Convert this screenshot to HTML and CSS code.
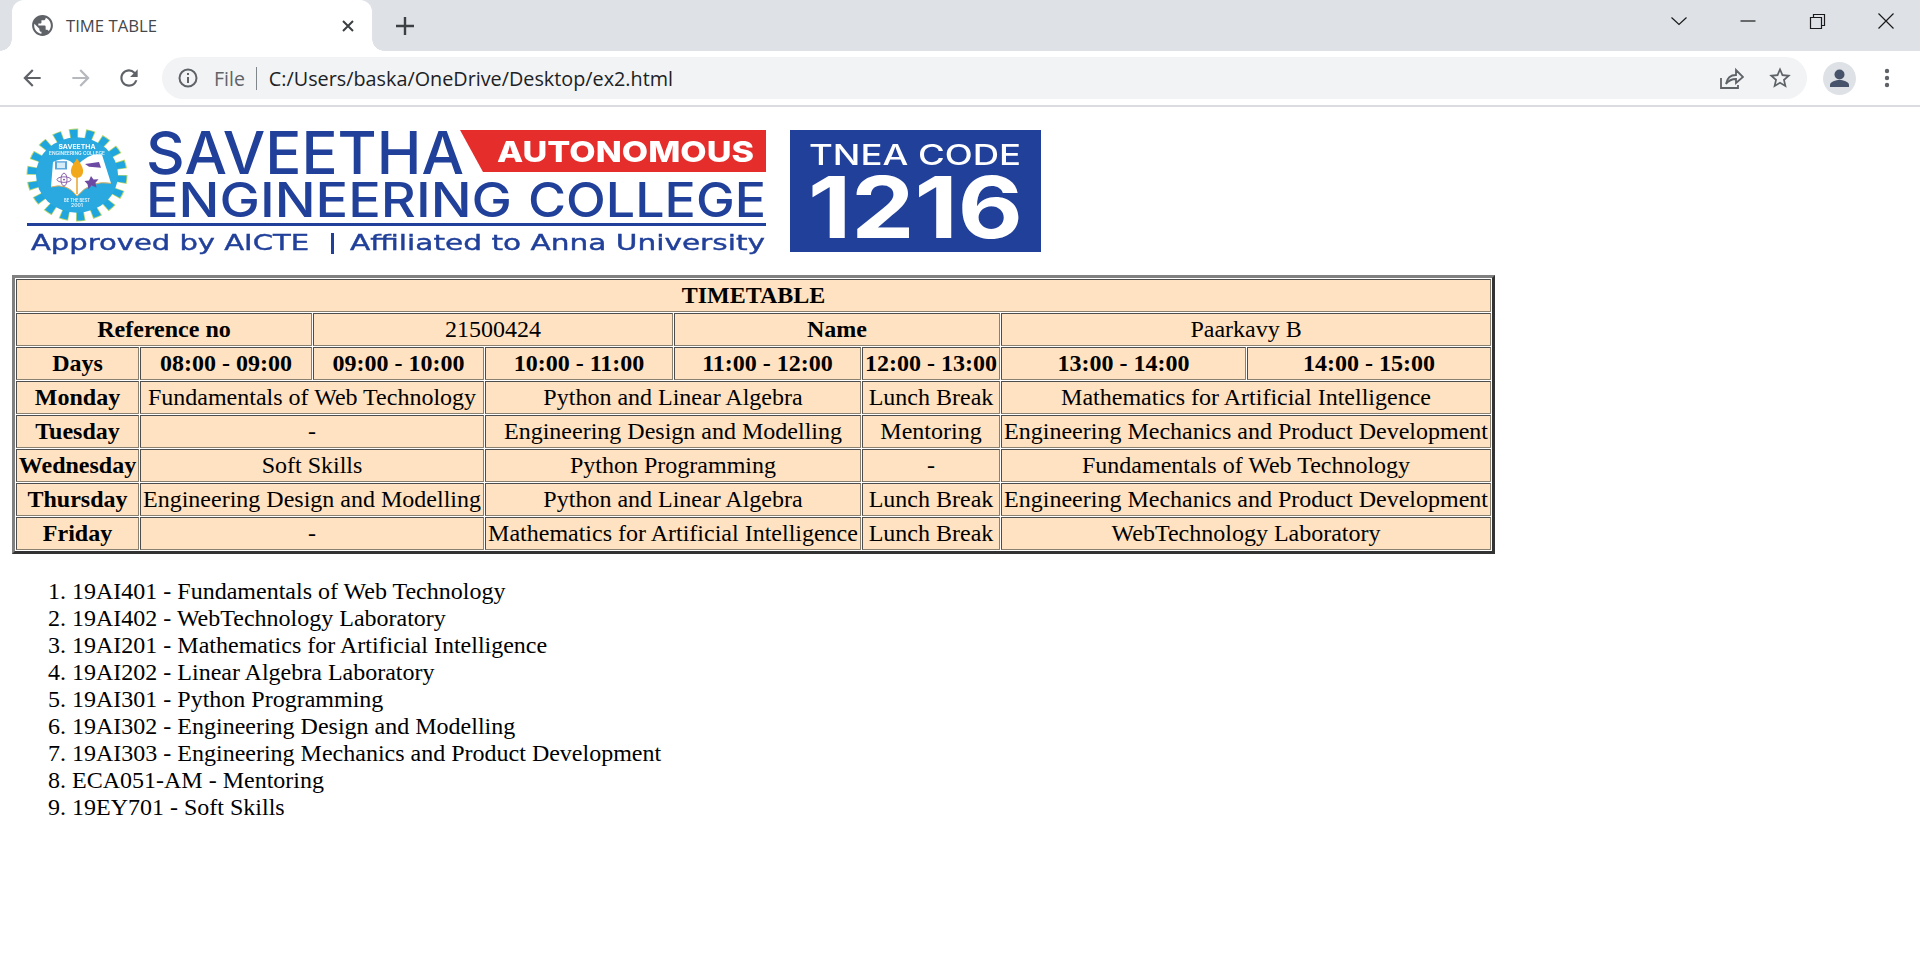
FILE: index.html
```html
<!DOCTYPE html>
<html lang="en">
<head>
<meta charset="utf-8">
<title>TIME TABLE</title>
<link rel="stylesheet" href="styles.css">
</head>
<body>
<header class="chrome">
  <div class="strip">
    <div class="tab">
      <svg class="globe" viewBox="0 0 24 24"><path d="M12 2C6.48 2 2 6.48 2 12s4.48 10 10 10 10-4.48 10-10S17.52 2 12 2zm-1 17.93c-3.95-.49-7-3.85-7-7.93 0-.62.08-1.21.21-1.79L9 15v1c0 1.1.9 2 2 2v1.93zm6.9-2.54c-.26-.81-1-1.39-1.9-1.39h-1v-3c0-.55-.45-1-1-1H8v-2h2c.55 0 1-.45 1-1V7h2c1.1 0 2-.9 2-2v-.41c2.93 1.19 5 4.06 5 7.41 0 2.08-.8 3.97-2.1 5.39z"/></svg>
      <span class="tab-title">TIME TABLE</span>
      <svg class="tab-close" viewBox="0 0 16 16"><path d="M3 3l10 10M13 3L3 13"/></svg>
    </div>
    <svg class="new-tab" viewBox="0 0 26 26"><path d="M13 4v18M4 13h18"/></svg>
    <div class="win">
      <div class="win-btn"><svg viewBox="0 0 18 18"><path d="M1.500 5.500L9 12.500l7.500-7"/></svg></div>
      <div class="win-btn"><svg viewBox="0 0 18 18"><path d="M1.500 9h15"/></svg></div>
      <div class="win-btn"><svg viewBox="0 0 18 18"><path d="M2.500 5.500h11v11h-11zM5.500 5.500v-3h11v11h-3"/></svg></div>
      <div class="win-btn"><svg viewBox="0 0 18 18"><path d="M1.500 1.500l15 15M16.500 1.500l-15 15"/></svg></div>
    </div>
  </div>
  <div class="toolbar">
    <svg class="nav" viewBox="0 0 24 24"><path d="M20 11H7.830l5.590-5.590L12 4l-8 8 8 8 1.410-1.410L7.830 13H20v-2z"/></svg>
    <svg class="nav nav-off" viewBox="0 0 24 24"><path d="M4 11h12.170l-5.590-5.590L12 4l8 8-8 8-1.410-1.410L16.170 13H4v-2z"/></svg>
    <svg class="nav nav-reload" viewBox="0 0 24 24"><path d="M17.650 6.350A7.958 7.958 0 0 0 12 4c-4.420 0-7.990 3.580-7.990 8s3.570 8 7.990 8c3.730 0 6.840-2.550 7.730-6h-2.080A5.990 5.990 0 0 1 12 18c-3.310 0-6-2.690-6-6s2.690-6 6-6c1.660 0 3.140.690 4.220 1.780L13 11h7V4l-2.350 2.350z"/></svg>
    <div class="omnibox">
      <svg class="info" viewBox="0 0 22 22"><circle cx="11" cy="11" r="8.500"/><path d="M11 10v6M11 6v2"/></svg>
      <span class="scheme">File</span>
      <span class="sep"></span>
      <span class="url">C:/Users/baska/OneDrive/Desktop/ex2.html</span>
      <svg class="share" viewBox="0 0 26 26"><path d="M3 13v10h17v-3M8 19c1-6 5-9 10-9V5l7 7-7 6v-4c-4 0-7 1-10 5z"/></svg>
      <svg class="star" viewBox="0 0 24 24"><path d="M22 9.240l-7.190-.620L12 2 9.190 8.630 2 9.240l5.460 4.730L5.820 21 12 17.270 18.180 21l-1.630-7.030L22 9.240zM12 15.400l-3.760 2.270 1-4.280-3.320-2.880 4.380-.380L12 6.100l1.710 4.040 4.380.380-3.320 2.880 1 4.280L12 15.400z"/></svg>
    </div>
    <svg class="avatar" viewBox="0 0 33 33"><circle class="avatar-bg" cx="16.500" cy="16.500" r="16.500"/><circle class="avatar-fg" cx="16.500" cy="12.500" r="5"/><path class="avatar-fg" d="M7 25v-2c0-3.500 6-5 9.500-5s9.500 1.500 9.500 5v2z"/></svg>
    <svg class="dots" viewBox="0 0 24 24"><circle cx="12" cy="5" r="2.200"/><circle cx="12" cy="12" r="2.200"/><circle cx="12" cy="19" r="2.200"/></svg>
  </div>
</header>

<main class="page">
  <svg class="logo" viewBox="12 107 1040 152">
    <g class="gear" transform="translate(1 14) scale(1 .92)">
      <circle class="teeth-edge" cx="76" cy="175" r="44"/>
      <circle class="teeth" cx="76" cy="175" r="44"/>
      <circle class="disc" cx="76" cy="175" r="41"/>
      <path class="page-white" d="M52 161Q66 153 75 166Q88 150 101 153L110 184Q90 180 76 198Q66 183 50 188z"/>
      <path class="book-edge" d="M50 188Q66 183 76 198Q90 180 110 184"/>
      <rect class="mon" x="54" y="160" width="12" height="9"/>
      <rect class="mon-in" x="56" y="161.500" width="8" height="6"/>
      <g class="atom"><ellipse cx="63" cy="180" rx="7" ry="3"/><ellipse cx="63" cy="180" rx="3" ry="7"/><circle cx="63" cy="180" r="1"/></g>
      <path class="pen" d="M76 172V196"/>
      <path class="flame" d="M76 157Q83 167 82 172A6 6 0 0 1 70 172Q69 167 76 157z"/>
      <path class="purple" d="M84 163L98 161L100 167L88 166z"/>
      <path class="purple" d="M90 176l2.500 4 5-.500-3 4 1 5-5-2-3 4-1-5.500-3-3.500 4.500-.500z"/>
      <text class="g-t" x="76" y="147" textLength="37" lengthAdjust="spacingAndGlyphs">SAVEETHA</text>
      <text class="g-s" x="76" y="153" textLength="56" lengthAdjust="spacingAndGlyphs">ENGINEERING COLLEGE</text>
      <text class="g-s" x="76" y="204" textLength="26" lengthAdjust="spacingAndGlyphs">BE THE BEST</text>
      <text class="g-s" x="76" y="209.500" textLength="12" lengthAdjust="spacingAndGlyphs">2001</text>
    </g>
    <text class="l-big" x="146" y="174" textLength="318" lengthAdjust="spacingAndGlyphs">SAVEETHA</text>
    <path class="red" d="M460 130H766V172H483z"/>
    <text class="l-auto" x="497" y="162" textLength="257" lengthAdjust="spacingAndGlyphs">AUTONOMOUS</text>
    <text class="l-mid" x="146" y="217" textLength="366" lengthAdjust="spacingAndGlyphs">ENGINEERING</text>
    <text class="l-mid" x="528" y="217" textLength="238" lengthAdjust="spacingAndGlyphs">COLLEGE</text>
    <rect class="rule" x="27" y="223" width="739" height="3"/>
    <text class="l-small" x="31" y="250" textLength="278" lengthAdjust="spacingAndGlyphs">Approved by AICTE</text>
    <rect class="rule" x="331" y="233" width="3" height="21"/>
    <text class="l-small" x="350" y="250" textLength="415" lengthAdjust="spacingAndGlyphs">Affiliated to Anna University</text>
    <rect class="rule" x="790" y="130" width="251" height="122"/>
    <text class="l-tnea" x="809" y="165" textLength="212" lengthAdjust="spacingAndGlyphs">TNEA CODE</text>
    <text class="l-code" x="808" y="238" textLength="215" lengthAdjust="spacingAndGlyphs">1216</text>
  </svg>

  <table class="timetable">
    <colgroup>
      <col class="c1"><col class="c2"><col class="c3"><col class="c4"><col class="c5"><col class="c6"><col class="c7"><col class="c8">
    </colgroup>
    <tr><th colspan="8">TIMETABLE</th></tr>
    <tr><th colspan="2">Reference no</th><td colspan="2">21500424</td><th colspan="2">Name</th><td colspan="2">Paarkavy B</td></tr>
    <tr><th>Days</th><th>08:00 - 09:00</th><th>09:00 - 10:00</th><th>10:00 - 11:00</th><th>11:00 - 12:00</th><th>12:00 - 13:00</th><th>13:00 - 14:00</th><th>14:00 - 15:00</th></tr>
    <tr><th>Monday</th><td colspan="2">Fundamentals of Web Technology</td><td colspan="2">Python and Linear Algebra</td><td>Lunch Break</td><td colspan="2">Mathematics for Artificial Intelligence</td></tr>
    <tr><th>Tuesday</th><td colspan="2">-</td><td colspan="2">Engineering Design and Modelling</td><td>Mentoring</td><td colspan="2">Engineering Mechanics and Product Development</td></tr>
    <tr><th>Wednesday</th><td colspan="2">Soft Skills</td><td colspan="2">Python Programming</td><td>-</td><td colspan="2">Fundamentals of Web Technology</td></tr>
    <tr><th>Thursday</th><td colspan="2">Engineering Design and Modelling</td><td colspan="2">Python and Linear Algebra</td><td>Lunch Break</td><td colspan="2">Engineering Mechanics and Product Development</td></tr>
    <tr><th>Friday</th><td colspan="2">-</td><td colspan="2">Mathematics for Artificial Intelligence</td><td>Lunch Break</td><td colspan="2">WebTechnology Laboratory</td></tr>
  </table>

  <ol class="courses">
    <li>19AI401 - Fundamentals of Web Technology</li>
    <li>19AI402 - WebTechnology Laboratory</li>
    <li>19AI201 - Mathematics for Artificial Intelligence</li>
    <li>19AI202 - Linear Algebra Laboratory</li>
    <li>19AI301 - Python Programming</li>
    <li>19AI302 - Engineering Design and Modelling</li>
    <li>19AI303 - Engineering Mechanics and Product Development</li>
    <li>ECA051-AM - Mentoring</li>
    <li>19EY701 - Soft Skills</li>
  </ol>
</main>
</body>
</html>
```

FILE: styles.css
```css
* { box-sizing: border-box; }
html, body { margin: 0; padding: 0; background: #fff; }
body { font-family: "Liberation Serif", "Times New Roman", serif; color: #000; overflow: hidden; }

/* Browser chrome */
.chrome { font-family: "Open Sans", "Noto Sans", sans-serif; }
.strip { display: flex; align-items: flex-start; height: 51px; background: #dee1e6; padding-left: 12px; }
.tab { position: relative; display: flex; align-items: center; width: 360px; height: 51px; padding: 0 16px 0 18px; background: #fff; border-radius: 12px 12px 0 0; }
.tab::before, .tab::after { content: ""; position: absolute; bottom: 0; width: 12px; height: 12px; }
.tab::before { left: -12px; background: radial-gradient(circle at 0 0, transparent 11.500px, #fff 12px); }
.tab::after { right: -12px; background: radial-gradient(circle at 100% 0, transparent 11.500px, #fff 12px); }
.globe { width: 25px; height: 25px; fill: #5f6368; flex: none; }
.tab-title { margin-left: 11px; font-size: 16.700px; color: #45474a; white-space: nowrap; }
.tab-close { width: 16px; height: 16px; margin-left: auto; fill: none; stroke: #3c4043; stroke-width: 2; flex: none; }
.new-tab { width: 26px; height: 26px; margin: 13px 0 0 20px; fill: none; stroke: #3c4043; stroke-width: 2.400; flex: none; }
.win { display: flex; margin-left: auto; }
.win-btn { display: flex; align-items: center; justify-content: center; width: 69px; height: 42px; }
.win-btn svg { width: 18px; height: 18px; fill: none; stroke: #1a1a1a; stroke-width: 1.200; }

.toolbar { display: flex; align-items: center; height: 56px; padding: 0 21px 0 19px; background: #fff; border-bottom: 2px solid #dadce0; }
.nav { width: 26px; height: 26px; fill: #5f6368; flex: none; margin-right: 23px; }
.nav-off { fill: #b5b8bc; margin-right: 22px; }
.nav-reload { margin-right: 20px; }
.omnibox { display: flex; align-items: center; flex: 1; height: 42px; padding: 0 14px 0 15px; background: #f1f3f4; border-radius: 21px; }
.info { width: 22px; height: 22px; fill: none; stroke: #5f6368; stroke-width: 2; flex: none; }
.scheme { margin-left: 15px; font-size: 19.500px; color: #5f6368; }
.sep { width: 1px; height: 23px; margin: 0 12px 0 11px; background: #80868b; }
.url { font-size: 19.800px; color: #202124; white-space: nowrap; }
.share { width: 26px; height: 26px; margin-left: auto; fill: none; stroke: #5f6368; stroke-width: 1.800; flex: none; }
.star { width: 26px; height: 26px; margin-left: 23px; fill: #5f6368; flex: none; }
.avatar { width: 33px; height: 33px; margin-left: 16px; flex: none; }
.avatar-bg { fill: #dee1e6; }
.avatar-fg { fill: #47536b; }
.dots { width: 24px; height: 24px; margin-left: 19px; fill: #5f6368; flex: none; }

/* Page */
.page { padding: 0 12px; }
.logo { display: block; width: 1040px; height: 152px; margin-bottom: 16px; filter: blur(0.4px); }
.logo text { font-family: Inter, "Open Sans", sans-serif; }
.teeth-edge { fill: none; stroke: #b7d76f; stroke-width: 13; stroke-dasharray: 8.500 6.860; }
.teeth { fill: none; stroke: #1fa6df; stroke-width: 11; stroke-dasharray: 7 8.360; stroke-dashoffset: -0.750; }
.disc { fill: #29a9e0; }
.page-white { fill: #fff; }
.book-edge { fill: none; stroke: #e6b25a; stroke-width: 1; }
.mon { fill: #5aa6dc; }
.mon-in { fill: #d6ecf8; }
.atom ellipse { fill: none; stroke: #7b4fa0; stroke-width: 0.900; }
.atom circle { fill: #7b4fa0; }
.pen { fill: none; stroke: #e9a93a; stroke-width: 1.600; }
.flame { fill: #f2a81d; }
.purple { fill: #6c4aa3; }
.logo .g-t { font-size: 6px; font-weight: 700; fill: #fff; text-anchor: middle; }
.logo .g-s { font-size: 5px; font-weight: 600; fill: #e8f6fd; text-anchor: middle; }
.l-big { font-size: 59px; font-weight: 500; fill: #21409a; }
.l-mid { font-size: 48px; font-weight: 500; fill: #21409a; }
.red { fill: #e52d2b; }
.l-auto { font-size: 29px; font-weight: 800; fill: #fff; }
.rule { fill: #21409a; }
.logo .l-small { font-family: "DejaVu Sans", sans-serif; font-size: 22px; fill: #21409a; stroke: #21409a; stroke-width: 0.400; }
.l-tnea { font-size: 28px; font-weight: 500; fill: #fff; }
.l-code { font-size: 85px; font-weight: 700; fill: #fff; }

/* Timetable */
.timetable { table-layout: fixed; width: 1483px; border-collapse: separate; border-spacing: 1px; border: 3px solid; border-color: #808080 #333 #333 #808080; background: #fff; font-size: 24px; }
.timetable col { box-sizing: border-box; }
.c1 { width: 123px; }
.c2 { width: 172px; }
.c3 { width: 171px; }
.c4 { width: 188px; }
.c5 { width: 187px; }
.c6 { width: 138px; }
.c7 { width: 245px; }
.c8 { width: 244px; }
.timetable th, .timetable td { height: 33px; padding: 0; border: 1px solid; border-color: #4d4d4d #8a8070 #8a8070 #4d4d4d; background: #ffe2c1; text-align: center; vertical-align: middle; white-space: nowrap; line-height: 27px; overflow: visible; }

/* Course list */
.courses { margin: 24px 0 0; padding: 0 0 0 60px; font-size: 24px; line-height: 27px; }
```
